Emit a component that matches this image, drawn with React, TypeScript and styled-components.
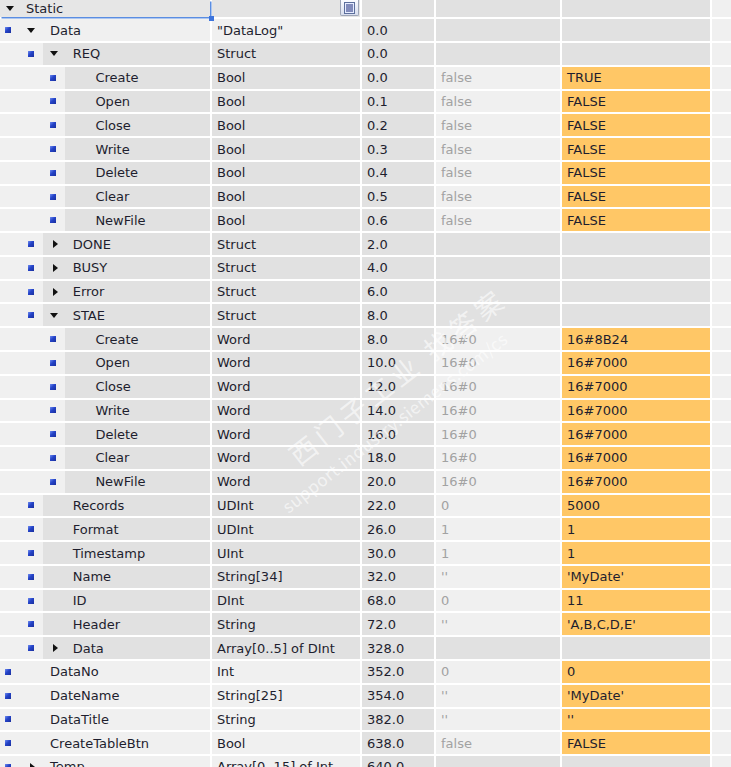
import React from 'react';
import styled, { createGlobalStyle } from 'styled-components';

const GlobalStyle = createGlobalStyle`
  html, body {
    margin: 0;
    padding: 0;
    overflow: hidden;
    background: #ffffff;
  }
  body {
    font-family: "DejaVu Sans", "Noto Sans", "Noto Sans CJK SC", sans-serif;
    font-size: 13px;
    color: #1e1e2e;
  }
`;

const LIGHT = '#f0f0f0';
const DARK = '#e1e1e1';
const ORANGE = '#ffc766';
const STEP = 22.7;

type Tone = 'light' | 'dark' | 'orange';

interface Row {
  name: string;
  level: number;
  exp?: 'open' | 'closed';
  type: string;
  offset: string;
  start?: string;
  mon?: string;
  ro?: boolean;
}

const Page = styled.div`
  position: relative;
  width: 731px;
  height: 767px;
  overflow: hidden;
`;

const Table = styled.div`
  display: flex;
  flex-direction: column;
  gap: 2px;
  background: #ffffff;
`;

const RowGrid = styled.div<{ $header?: boolean }>`
  display: grid;
  grid-template-columns: 210px 148px 72px 124px 148px 1fr;
  column-gap: 2px;
  height: ${p => (p.$header ? '17.3px' : '21.77px')};
  flex-shrink: 0;
`;

const Cell = styled.div<{ $tone: Tone; $muted?: boolean }>`
  display: flex;
  align-items: center;
  padding-left: 5px;
  background: ${p => (p.$tone === 'orange' ? ORANGE : p.$tone === 'dark' ? DARK : LIGHT)};
  color: ${p => (p.$muted ? '#a2a2a2' : '#1e1e2e')};
  white-space: nowrap;
  overflow: hidden;
`;

const HeaderName = styled.div`
  position: relative;
  display: flex;
  align-items: center;
  background: #e6e6e6;
  box-shadow: 1.5px 1.5px 0 #5a8de2;
  padding-left: 6px;
  gap: 12px;

  &::after {
    content: '';
    position: absolute;
    right: -4px;
    bottom: -4px;
    width: 5px;
    height: 5px;
    background: #3d74dc;
  }
`;

const HeaderType = styled.div`
  display: flex;
  align-items: flex-start;
  justify-content: flex-end;
  padding-right: 1px;
  background: #e4e4e4;
`;

const ListButton = styled.div`
  width: 19px;
  height: 16px;
  box-sizing: border-box;
  border: 1px solid #9ea6b8;
  border-top: none;
  border-radius: 0 0 2px 2px;
  background: linear-gradient(#fafbff, #d8deee);
  display: flex;
  align-items: center;
  justify-content: center;
`;

const NameCell = styled.div<{ $level: number }>`
  display: flex;
  background: ${LIGHT};
  padding-left: ${p => p.$level * STEP}px;
  overflow: hidden;
`;

const BulletSlot = styled.div`
  width: 20px;
  flex-shrink: 0;
  display: flex;
  align-items: center;
  padding-left: 5px;
  box-sizing: border-box;
`;

const Bullet = styled.div`
  width: 6px;
  height: 6px;
  background: linear-gradient(135deg, #6f8cf0 0%, #2443c8 45%, #1a2f9c 100%);
`;

const TreePart = styled.div<{ $dark?: boolean }>`
  flex: 1;
  display: flex;
  align-items: center;
  background: ${p => (p.$dark ? DARK : LIGHT)};
  white-space: nowrap;
`;

const Toggle = styled.div<{ $exp?: 'open' | 'closed' }>`
  width: 30px;
  flex-shrink: 0;
  display: flex;
  align-items: center;
  padding-left: ${p => (p.$exp === 'closed' ? 10 : 7)}px;
  box-sizing: border-box;
`;

const Caret = styled.span<{ $open: boolean }>`
  width: 0;
  height: 0;
  ${p =>
    p.$open
      ? `border-left: 4.5px solid transparent;
         border-right: 4.5px solid transparent;
         border-top: 5px solid #111111;`
      : `border-top: 4.5px solid transparent;
         border-bottom: 4.5px solid transparent;
         border-left: 5px solid #111111;`}
`;

const Mark = styled.div<{ $top: number; $left: number; $size: number; $spacing: number }>`
  position: absolute;
  left: ${p => p.$left}px;
  top: ${p => p.$top}px;
  transform: translateY(-50%) rotate(-38deg);
  transform-origin: left center;
  font-family: "Noto Sans CJK SC", "Noto Sans", sans-serif;
  font-size: ${p => p.$size}px;
  letter-spacing: ${p => p.$spacing}px;
  color: rgba(255, 255, 255, 0.6);
  white-space: nowrap;
  pointer-events: none;
`;

const bools = ['Create', 'Open', 'Close', 'Write', 'Delete', 'Clear', 'NewFile'];

const rows: Row[] = [
  { name: 'Data', level: 0, exp: 'open', type: '"DataLog"', offset: '0.0' },
  { name: 'REQ', level: 1, exp: 'open', type: 'Struct', offset: '0.0', ro: true },
  ...bools.map((n, i) => ({
    name: n,
    level: 2,
    type: 'Bool',
    offset: `0.${i}`,
    start: 'false',
    mon: i === 0 ? 'TRUE' : 'FALSE',
    ro: true,
  })),
  { name: 'DONE', level: 1, exp: 'closed', type: 'Struct', offset: '2.0', ro: true },
  { name: 'BUSY', level: 1, exp: 'closed', type: 'Struct', offset: '4.0', ro: true },
  { name: 'Error', level: 1, exp: 'closed', type: 'Struct', offset: '6.0', ro: true },
  { name: 'STAE', level: 1, exp: 'open', type: 'Struct', offset: '8.0', ro: true },
  ...bools.map((n, i) => ({
    name: n,
    level: 2,
    type: 'Word',
    offset: `${8 + i * 2}.0`,
    start: '16#0',
    mon: i === 0 ? '16#8B24' : '16#7000',
    ro: true,
  })),
  { name: 'Records', level: 1, type: 'UDInt', offset: '22.0', start: '0', mon: '5000', ro: true },
  { name: 'Format', level: 1, type: 'UDInt', offset: '26.0', start: '1', mon: '1', ro: true },
  { name: 'Timestamp', level: 1, type: 'UInt', offset: '30.0', start: '1', mon: '1', ro: true },
  { name: 'Name', level: 1, type: 'String[34]', offset: '32.0', start: "''", mon: "'MyDate'", ro: true },
  { name: 'ID', level: 1, type: 'DInt', offset: '68.0', start: '0', mon: '11', ro: true },
  { name: 'Header', level: 1, type: 'String', offset: '72.0', start: "''", mon: "'A,B,C,D,E'", ro: true },
  { name: 'Data', level: 1, exp: 'closed', type: 'Array[0..5] of DInt', offset: '328.0', ro: true },
  { name: 'DataNo', level: 0, type: 'Int', offset: '352.0', start: '0', mon: '0' },
  { name: 'DateName', level: 0, type: 'String[25]', offset: '354.0', start: "''", mon: "'MyDate'" },
  { name: 'DataTitle', level: 0, type: 'String', offset: '382.0', start: "''", mon: "''" },
  { name: 'CreateTableBtn', level: 0, type: 'Bool', offset: '638.0', start: 'false', mon: 'FALSE' },
  { name: 'Temp', level: 0, exp: 'closed', type: 'Array[0..15] of Int', offset: '640.0' },
];

const ListIcon = () => (
  <svg width="11" height="12" viewBox="0 0 11 12">
    <rect x="0.5" y="0.5" width="10" height="11" fill="#e6ecff" stroke="#5c6f9c" />
    {[2.5, 4.5, 6.5, 8.5].map(y => (
      <rect key={y} x="2" y={y} width="7" height="1" fill="#1c2a78" />
    ))}
  </svg>
);

const DataRow: React.FC<{ row: Row }> = ({ row }) => {
  const hasValue = row.start !== undefined;
  return (
    <RowGrid>
      <NameCell $level={row.level}>
        <BulletSlot>
          <Bullet />
        </BulletSlot>
        <TreePart $dark={row.ro}>
          <Toggle $exp={row.exp}>{row.exp && <Caret $open={row.exp === 'open'} />}</Toggle>
          {row.name}
        </TreePart>
      </NameCell>
      <Cell $tone={row.ro ? 'dark' : 'light'}>{row.type}</Cell>
      <Cell $tone="dark">{row.offset}</Cell>
      <Cell $tone={hasValue ? 'light' : 'dark'} $muted>
        {row.start}
      </Cell>
      <Cell $tone={hasValue ? 'orange' : 'dark'}>{row.mon}</Cell>
      <Cell $tone="light" />
    </RowGrid>
  );
};

const App: React.FC = () => {
  return (
    <Page>
      <GlobalStyle />
      <Table>
        <RowGrid $header>
          <HeaderName>
            <Caret $open />
            Static
          </HeaderName>
          <HeaderType>
            <ListButton>
              <ListIcon />
            </ListButton>
          </HeaderType>
          <Cell $tone="dark" />
          <Cell $tone="dark" />
          <Cell $tone="dark" />
          <Cell $tone="light" />
        </RowGrid>
        {rows.map((r, i) => (
          <DataRow key={i} row={r} />
        ))}
      </Table>
      <Mark $left={292} $top={458} $size={27} $spacing={5}>
        西门子工业 找答案
      </Mark>
      <Mark $left={284} $top={508} $size={17} $spacing={0.5}>
        support.industry.siemens.com/cs
      </Mark>
    </Page>
  );
};

export default App;
